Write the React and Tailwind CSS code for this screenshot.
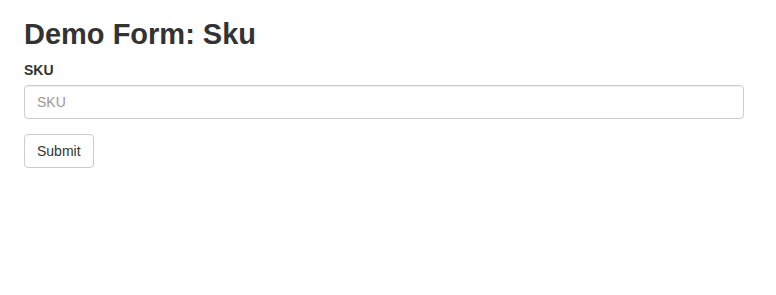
export default function App() {
  return (
    <div className="bg-white min-h-[295px] px-6 text-[#333]" style={{ fontFamily: '"Liberation Sans", Arial, sans-serif' }}>
      <div className="w-[720px]">
        <h1 className="pt-[18px] mb-2.5 text-[29px] leading-[32px] font-bold">Demo Form: Sku</h1>
        <form onSubmit={(e) => e.preventDefault()}>
          <div className="mb-[15px]">
            <label htmlFor="skuInput" className="block mb-[5px] text-sm leading-5 font-bold">SKU</label>
            <input
              id="skuInput"
              type="text"
              placeholder="SKU"
              className="block w-full h-[34px] px-3 py-1.5 text-sm leading-5 border border-[#ccc] rounded bg-white shadow-[inset_0_1px_1px_rgba(0,0,0,0.075)] placeholder:text-[#999] focus:outline-none"
            />
          </div>
          <button type="submit" className="h-[34px] px-3 py-1.5 text-sm leading-5 border border-[#ccc] rounded bg-white text-[#333]">
            Submit
          </button>
        </form>
      </div>
    </div>
  );
}
